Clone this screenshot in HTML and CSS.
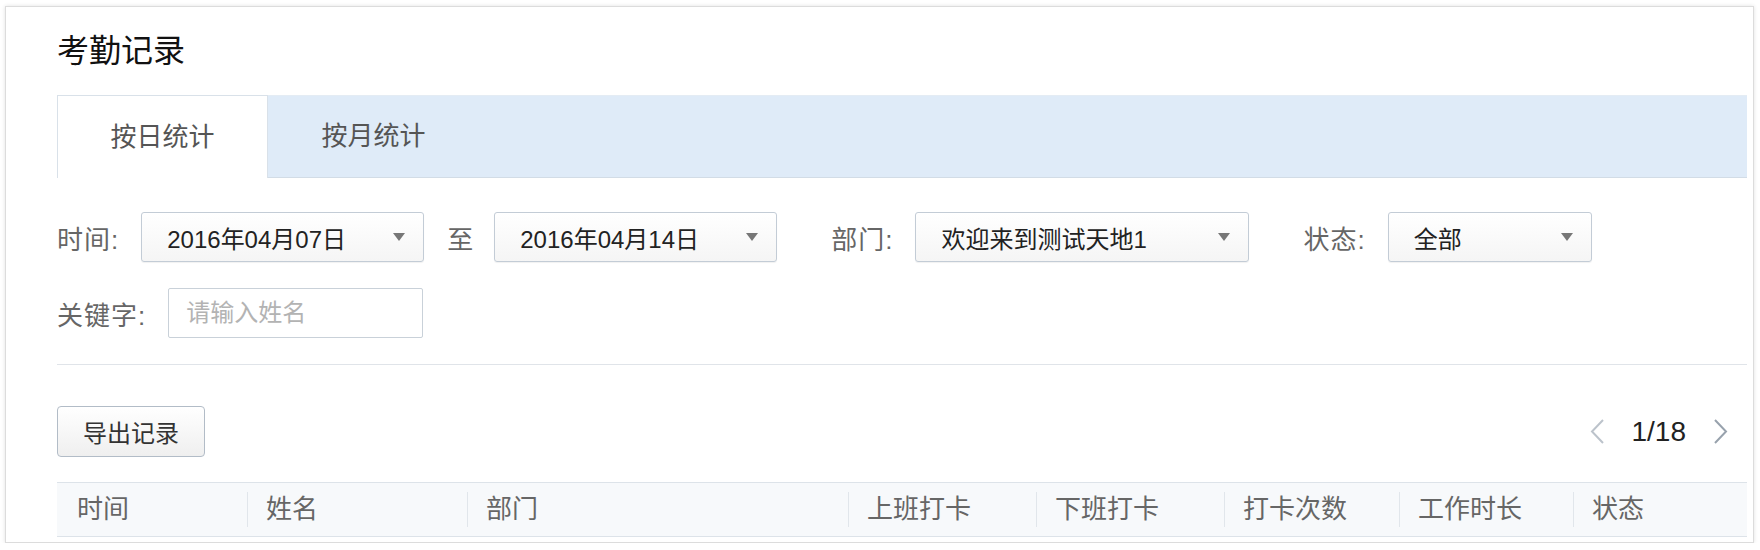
FILE: index.html
```html
<!DOCTYPE html>
<html lang="zh-CN">

<head>
    <meta charset="UTF-8">
    <meta name="viewport" content="width=device-width, initial-scale=1.0">
    <title>考勤记录</title>
    <link rel="stylesheet" href="styles.css">
</head>

<body>
    <div class="card">
        <h2 class="title">考勤记录</h2>

        <div class="tabs">
            <div class="tab active">按日统计</div>
            <div class="tab">按月统计</div>
        </div>

        <div class="filters">
            <div class="filter-row">
                <div class="field">
                    <span class="label">时间:</span>
                    <div class="select date">2016年04月07日<i class="caret"></i></div>
                </div>
                <span class="to">至</span>
                <div class="select date">2016年04月14日<i class="caret"></i></div>
                <div class="field gap">
                    <span class="label">部门:</span>
                    <div class="select dept">欢迎来到测试天地1<i class="caret"></i></div>
                </div>
                <div class="field gap">
                    <span class="label">状态:</span>
                    <div class="select status">全部<i class="caret"></i></div>
                </div>
            </div>
            <div class="filter-row">
                <div class="field">
                    <span class="label">关键字:</span>
                    <input class="search" type="text" placeholder="请输入姓名">
                </div>
            </div>
        </div>

        <div class="toolbar">
            <button class="btn">导出记录</button>
            <div class="pager">
                <svg class="prev" width="15" height="25" viewBox="0 0 15 25">
                    <polyline points="13,1 2,12.5 13,24" fill="none" stroke="#bcc3cb" stroke-width="2" />
                </svg>
                <span class="page-num">1/18</span>
                <svg class="next" width="15" height="25" viewBox="0 0 15 25">
                    <polyline points="2,1 13,12.5 2,24" fill="none" stroke="#98a2ad" stroke-width="2" />
                </svg>
            </div>
        </div>

        <div class="table-head">
            <div class="th">时间</div>
            <div class="th">姓名</div>
            <div class="th">部门</div>
            <div class="th">上班打卡</div>
            <div class="th">下班打卡</div>
            <div class="th">打卡次数</div>
            <div class="th">工作时长</div>
            <div class="th">状态</div>
        </div>
    </div>
</body>

</html>
```

FILE: styles.css
```css
* {
    margin: 0;
    padding: 0;
    box-sizing: border-box;
}

body {
    font-family: "Liberation Sans", "Noto Sans CJK SC", sans-serif;
    background-color: #fff;
    color: #333;
}

.card {
    margin: 6px 6px 0 5px;
    padding: 24px 6px 5px 51px;
    background-color: #fff;
    border: 1px solid #dcdcdc;
    box-shadow: 0 0 4px rgba(0, 0, 0, 0.12);
}

.title {
    font-size: 32px;
    font-weight: normal;
    line-height: 40px;
    color: #111;
    margin-bottom: 24px;
}

/* tabs */
.tabs {
    display: flex;
    height: 83px;
    background-color: #dfebf8;
    border-top: 1px solid #e4ecf4;
    border-bottom: 1px solid #d2dce6;
}

.tab {
    width: 211px;
    font-size: 26px;
    color: #555;
    text-align: center;
    line-height: 81px;
}

.tab.active {
    background-color: #fff;
    border: 1px solid #d9e1e9;
    border-bottom: none;
    margin: -1px 0 -1px 0;
    height: 83px;
    line-height: 83px;
}

/* filters */
.filters {
    margin-top: 34px;
    padding-bottom: 26px;
    border-bottom: 1px solid #e0e4e9;
}

.filter-row {
    display: flex;
    align-items: center;
}

.filter-row + .filter-row {
    margin-top: 26px;
}

.field {
    display: flex;
    align-items: center;
}

.field.gap {
    margin-left: 54px;
}

.label {
    font-size: 26px;
    letter-spacing: 1px;
    color: #666;
    margin-right: 22px;
}

.to {
    font-size: 26px;
    color: #666;
    margin: 0 21px 0 23px;
}

.select {
    display: flex;
    align-items: center;
    height: 50px;
    padding: 0 18px 0 25px;
    font-size: 24px;
    color: #222;
    border: 1px solid #c3ccd6;
    border-radius: 3px;
    background: linear-gradient(#fff, #f5f5f5);
    box-shadow: 0 1px 1px rgba(0, 0, 0, 0.06);
}

.select.date {
    width: 283px;
}

.select.dept {
    width: 334px;
}

.select.status {
    width: 204px;
}

.caret {
    margin-left: auto;
    width: 0;
    height: 0;
    border-left: 6px solid transparent;
    border-right: 6px solid transparent;
    border-top: 8px solid #777;
}

.search {
    width: 255px;
    height: 50px;
    padding: 0 17px;
    font-family: inherit;
    font-size: 24px;
    color: #333;
    border: 1px solid #c9d1d9;
    border-radius: 2px;
    outline: none;
}

.search::placeholder {
    color: #b3b3b3;
}

/* toolbar */
.toolbar {
    display: flex;
    align-items: center;
    justify-content: space-between;
    padding-top: 41px;
}

.btn {
    width: 148px;
    height: 51px;
    font-family: inherit;
    font-size: 24px;
    color: #333;
    border: 1px solid #b2bcc7;
    border-radius: 4px;
    background: linear-gradient(#fff, #efefef);
    cursor: pointer;
}

.pager {
    display: flex;
    align-items: center;
    margin-right: 19px;
}

.page-num {
    font-size: 28px;
    color: #222;
    margin: 0 27px;
}

/* table */
.table-head {
    display: grid;
    grid-template-columns: 190px 220px 381px 188px 188px 175px 174px 1fr;
    align-items: center;
    height: 55px;
    margin-top: 25px;
    background-color: #f7f9fb;
    border-top: 1px solid #dde3e9;
    border-bottom: 1px solid #dde3e9;
}

.th {
    height: 35px;
    line-height: 35px;
    font-size: 26px;
    color: #666;
    padding-left: 18px;
    border-left: 1px solid #e1e6eb;
}

.th:first-child {
    padding-left: 20px;
    border-left: none;
}
```
